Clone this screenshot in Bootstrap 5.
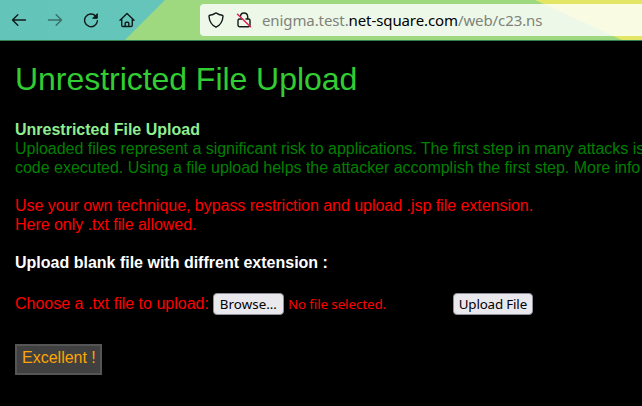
<!DOCTYPE html>
<html lang="en">
<head>
<meta charset="utf-8">
<meta name="viewport" content="width=device-width, initial-scale=1">
<title>Unrestricted File Upload</title>
<link href="https://cdn.jsdelivr.net/npm/bootstrap@5.3.0/dist/css/bootstrap.min.css" rel="stylesheet">
<style>
body{background:#000;font:16px/19px "Liberation Sans",Arial,sans-serif;overflow:hidden;height:406px}
.toolbar{height:41px;padding-left:11px;border-bottom:1px solid #347f4c;color:#101b1a}
.theme-bg{inset:0;z-index:-1;background:linear-gradient(90deg,#63c5b9,#69c4bf)}
.theme-bg svg{display:block}
.toolbar .tool{width:16px;height:16px;margin-right:20px;flex:none}
.toolbar svg{fill:none;stroke:currentColor;stroke-width:1.4;stroke-linecap:round;stroke-linejoin:round}
.address{height:32px;margin-left:65px;padding-left:8px;background:rgba(255,255,255,.82);border-radius:4px 0 0 4px;font:15px/32px "Noto Sans","Open Sans",sans-serif;color:#101b1a}
.address b{font-weight:400;color:#000}
.url{letter-spacing:-.1px;margin-left:6px;white-space:nowrap;color:#7d827b}
.page{padding:20px 0 0 15px;white-space:nowrap;overflow:hidden}
h1{font-size:32px;line-height:36px;color:#32cd32;margin:0 0 23px;font-weight:400;letter-spacing:-.04px}
.c-title{color:#90ee90}.c-info{color:#008000;letter-spacing:-.02px}.c-warn{color:#f00}
.block-gap{margin-top:19px}
.hint{letter-spacing:-.03px}
.native{height:22px;border:1px solid #8f8f9d;border-radius:4px;background:#e9e9ed;color:#000;padding:0;font:13.33px/20px "Noto Sans","Open Sans",sans-serif;text-align:center}
.pick{width:71px;margin-left:4px;letter-spacing:.08px}
.send{width:80px;letter-spacing:-.15px}
.none{font:13.33px/20px "Noto Sans","Open Sans",sans-serif;width:165px;margin-left:4px;letter-spacing:-.08px}
.label-text{padding-bottom:2px}
.upload-row{padding-top:2px}
.result{width:87px;height:31px;border:2px solid #555;background:#404040;color:orange;line-height:24px;padding-left:5px;margin-top:29px}
</style>
<script src="https://cdn.jsdelivr.net/npm/bootstrap@5.3.0/dist/js/bootstrap.bundle.min.js"></script>
</head>
<body>
<header class="toolbar d-flex align-items-center position-relative z-0">
  <div class="theme-bg position-absolute"><svg width="642" height="40"><path d="M165 0H642V40H125z" fill="#9fd97f" stroke="none"/><path d="M535 0H642V40H622z" fill="#e3e565" stroke="none"/></svg></div>
  <svg class="tool" viewBox="0 0 16 16"><path d="M14.5 8H1.5M6.8 2.7L1.5 8l5.3 5.3"/></svg>
  <svg class="tool opacity-50" viewBox="0 0 16 16"><path d="M1.5 8h13M9.2 2.7L14.5 8l-5.3 5.3"/></svg>
  <svg class="tool" viewBox="0 0 16 16"><path d="M12.7 4A6.4 6.4 0 1 0 14.4 8.8"/><path d="M14.3 2v4.3H10z" fill="currentColor" stroke-width="1"/></svg>
  <svg class="tool me-0" viewBox="0 0 16 16"><path d="M1 8.2L8 1.5l7 6.7M2.7 7v6.2q0 1.3 1.3 1.3h8q1.3 0 1.3-1.3V7M6.2 14.2v-3q0-1 1-1h1.6q1 0 1 1v3"/></svg>
  <div class="address d-flex align-items-center flex-grow-1">
    <svg width="16" height="16" viewBox="0 0 16 16"><path d="M8 .9q3 2 6.2 2.3.8.1.8 1C14.7 9.5 12.5 13 8 15.2 3.5 13 1.3 9.5 1 4.2q0-.9.8-1Q5 2.9 8 .9z"/></svg>
    <svg class="ms-2" width="24" height="16" viewBox="-4 0 24 16"><path d="M4.5 4.3Q4.7 1 8 1t3.7 3.5V7M6 7H3.5Q2 7 2 8.5v4.8q0 1.4 1.5 1.4h9q1.5 0 1.5-1.4V8.5Q14 7 12.5 7H10"/><path d="M1.5 2.2l13 12.5" stroke="#e6194f"/></svg>
    <span class="url">enigma.test.<b>net-square.com</b>/web/c23.ns</span>
  </div>
</header>
<main class="page">
  <h1>Unrestricted File Upload</h1>
  <div class="c-title fw-bold">Unrestricted File Upload</div>
  <div class="c-info">Uploaded files represent a significant risk to applications. The first step in many attacks is</div>
  <div class="c-info">code executed. Using a file upload helps the attacker accomplish the first step. More info</div>
  <div class="c-warn block-gap hint">Use your own technique, bypass restriction and upload .jsp file extension.</div>
  <div class="c-warn hint">Here only .txt file allowed.</div>
  <div class="text-white fw-bold block-gap">Upload blank file with diffrent extension :</div>
  <form class="upload-row d-flex align-items-center c-warn block-gap">
    <span class="label-text">Choose a .txt file to upload:</span>
    <button type="button" class="native pick">Browse…</button>
    <span class="none">No file selected.</span>
    <button type="button" class="native send">Upload File</button>
  </form>
  <div class="result">Excellent !</div>
</main>
</body>
</html>
